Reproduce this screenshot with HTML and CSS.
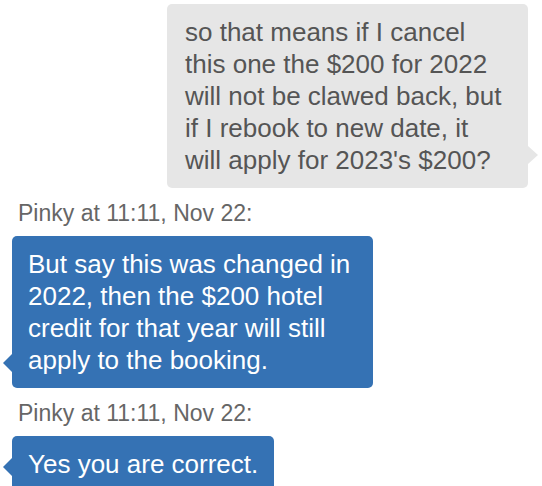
FILE: index.html
```html
<!DOCTYPE html>
<html>
<head>
<meta charset="utf-8">
<link rel="stylesheet" href="styles.css">
</head>
<body>
<div class="chat">
  <div class="msg out">
    <div class="bubble grey">so that means if I cancel this one the $200 for 2022 will not be clawed back, but if I rebook to new date, it will apply for 2023's $200?</div>
  </div>
  <div class="label">Pinky at 11:11, Nov 22:</div>
  <div class="msg in">
    <div class="bubble blue">But say this was changed in 2022, then the $200 hotel credit for that year will still apply to the booking.</div>
  </div>
  <div class="label">Pinky at 11:11, Nov 22:</div>
  <div class="msg in">
    <div class="bubble blue">Yes you are correct.</div>
  </div>
</div>
</body>
</html>
```
FILE: styles.css
```css
html, body {
  margin: 0;
  padding: 0;
  background: #fff;
}
body {
  font-family: "Liberation Sans", Arial, sans-serif;
}
.chat {
  padding: 4px 14px 0 12px;
  display: flex;
  flex-direction: column;
}
.msg {
  display: flex;
}
.msg.out {
  justify-content: flex-end;
}
.msg.in {
  justify-content: flex-start;
}
.bubble {
  position: relative;
  box-sizing: border-box;
  max-width: 361px;
  padding: 12px 16px;
  border-radius: 5px;
  font-size: 26px;
  line-height: 32px;
}
.grey {
  background: #e6e6e6;
  color: #555;
  padding-left: 18px;
  padding-right: 22px;
}
.grey::after {
  content: "";
  position: absolute;
  right: -10px;
  bottom: 24px;
  border-top: 9px solid transparent;
  border-bottom: 9px solid transparent;
  border-left: 10px solid #e6e6e6;
}
.blue {
  background: #3572b4;
  color: #fff;
}
.blue::before {
  content: "";
  position: absolute;
  left: -9px;
  bottom: 16px;
  border-top: 9px solid transparent;
  border-bottom: 9px solid transparent;
  border-right: 9px solid #3572b4;
}
.label {
  margin: 12px 0 10px 6px;
  font-size: 23px;
  line-height: 26px;
  color: #666;
}
```
